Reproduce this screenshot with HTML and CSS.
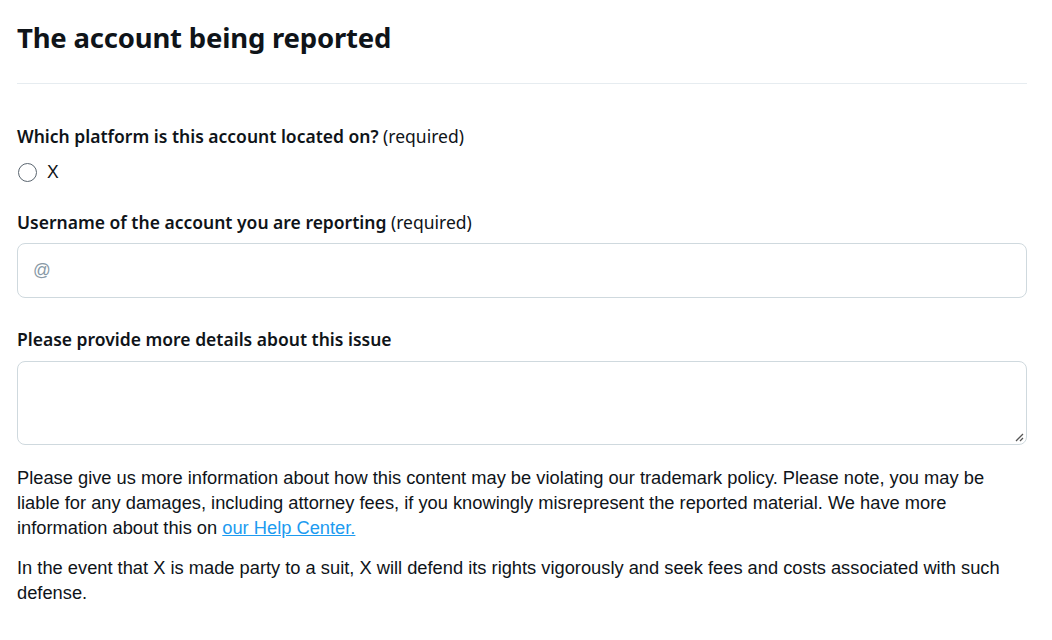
FILE: index.html
```html
<!DOCTYPE html>
<html lang="en">
<head>
<meta charset="utf-8">
<link rel="stylesheet" href="styles.css">
</head>
<body>
<main class="page">
  <h1 class="title">The account being reported</h1>
  <hr class="divider">
  <div class="field">
    <div class="label"><b>Which platform is this account located on?</b> (required)</div>
    <label class="radio-row"><span class="radio"></span><span class="radio-text">X</span></label>
  </div>
  <div class="field">
    <div class="label"><b>Username of the account you are reporting</b> (required)</div>
    <div class="input"><span class="placeholder">@</span></div>
  </div>
  <div class="field">
    <div class="label"><b>Please provide more details about this issue</b></div>
    <div class="textarea">
      <svg class="grip" width="10" height="10" viewBox="0 0 10 10"><path d="M9 2 L2 9 M9 6 L6 9" stroke="#555" stroke-width="1.3" fill="none"/></svg>
    </div>
  </div>
  <p class="text">Please give us more information about how this content may be violating our trademark policy. Please note, you may be liable for any damages, including attorney fees, if you knowingly misrepresent the reported material. We have more information about this on <a href="#" class="link">our Help Center. </a></p>
  <p class="text">In the event that X is made party to a suit, X will defend its rights vigorously and seek fees and costs associated with such defense.</p>
</main>
</body>
</html>
```
FILE: styles.css
```css
html, body { margin: 0; padding: 0; background: #fff; }
.page {
  width: 1010px;
  padding: 0 25px 0 17px;
  color: #0f1419;
}
.title {
  margin: 0;
  padding-top: 19px;
  font-family: "Noto Sans", "Open Sans", sans-serif;
  font-size: 27.5px;
  line-height: 38px;
  font-weight: 700;
  letter-spacing: -0.2px;
}
.divider {
  margin: 26px 0 0;
  border: 0;
  border-top: 1px solid #e6ecf0;
  height: 0;
}
.field { display: flex; flex-direction: column; }
.label {
  font-family: "Noto Sans", "Open Sans", sans-serif;
  font-size: 17.5px;
  line-height: 24px;
  font-weight: 400;
}
.label b { font-weight: 600; }
.field:nth-of-type(1) .label { margin-top: 40px; }
.radio-row { display: flex; align-items: center; gap: 10px; margin-top: 14px; height: 20px; }
.radio {
  width: 17px; height: 17px;
  border: 1px solid #5b6670;
  border-radius: 50%;
  margin-left: 1px;
}
.radio-text { font-family: "Liberation Sans", Arial, sans-serif; font-size: 17.5px; }
.field:nth-of-type(2) .label { margin-top: 28px; }
.input {
  box-sizing: border-box;
  margin-top: 9px;
  height: 55px;
  border: 1px solid #cfd9de;
  border-radius: 8px;
  display: flex;
  align-items: center;
  padding-left: 15px;
}
.placeholder { font-family: "Liberation Sans", Arial, sans-serif; font-size: 17.5px; color: #8899a6; }
.field:nth-of-type(3) .label { margin-top: 29px; }
.textarea {
  box-sizing: border-box;
  margin-top: 10px;
  height: 84px;
  border: 1px solid #cfd9de;
  border-radius: 8px;
  position: relative;
}
.grip { position: absolute; right: 2px; bottom: 2px; }
.text {
  font-family: "Liberation Sans", Arial, sans-serif;
  font-size: 18.3px;
  line-height: 25px;
  margin: 20px 0 0;
  color: #0f1419;
}
.text + .text { margin-top: 15px; }
.link { color: #1d9bf0; text-decoration: underline; }
```
